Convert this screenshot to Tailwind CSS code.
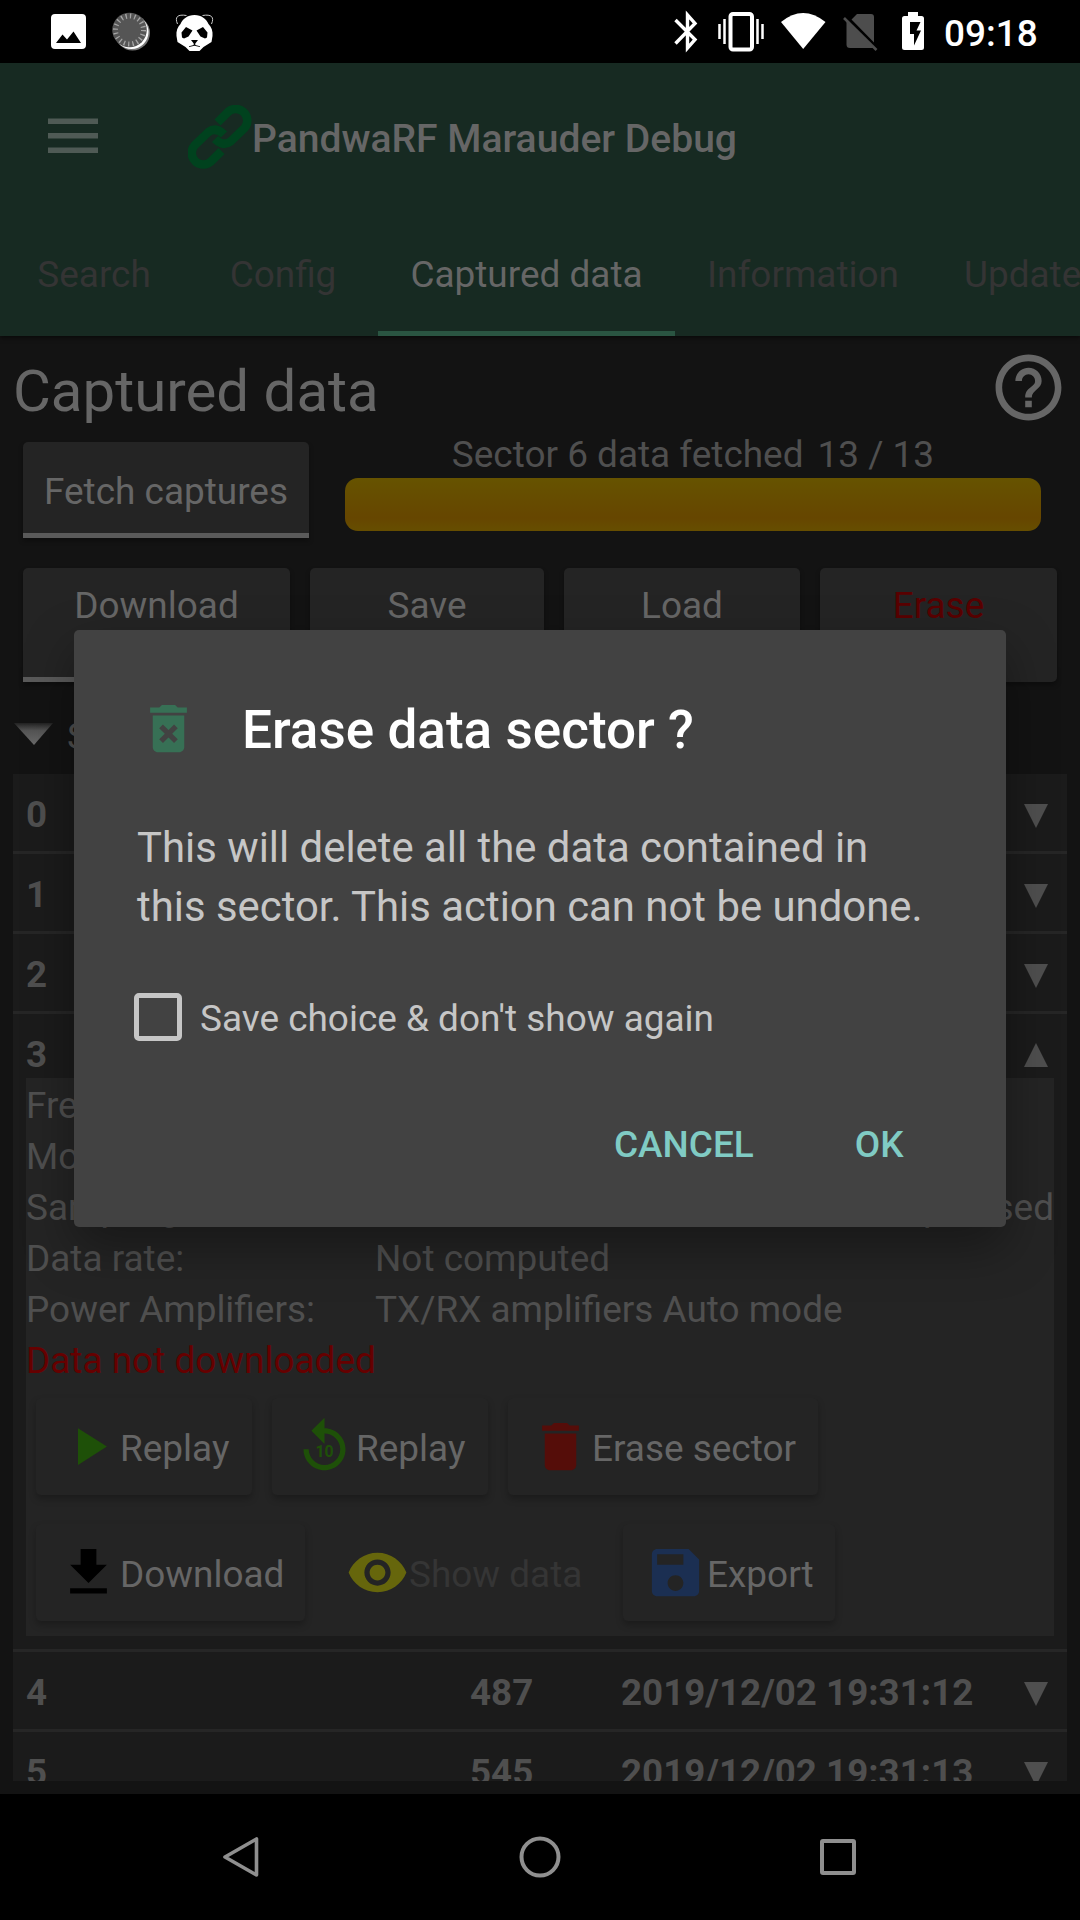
<!DOCTYPE html>
<html lang="en">
<head>
<meta charset="utf-8">
<title>PandwaRF Marauder Debug</title>
<script src="https://cdn.jsdelivr.net/npm/@tailwindcss/browser@4"></script>
</head>
<body class="bg-black">
<div class="relative flex h-[1920px] w-[1080px] flex-col overflow-hidden bg-[#131313] font-[Roboto,sans-serif] text-[36.95px] leading-[43px] text-[#4f4f4f]">

  <!-- Status bar -->
  <div class="flex h-[63px] shrink-0 items-center bg-black text-white">
    <svg class="h-[63px] w-[230px]" viewBox="0 0 230 63">
      <path fill="#fff" fill-rule="evenodd" d="M55 14h27a4 4 0 0 1 4 4v27a4 4 0 0 1-4 4H55a4 4 0 0 1-4-4V18a4 4 0 0 1 4-4zM56 43h25L73.500 31.500l-6.500 8-4.500-5z"/>
      <circle cx="132.500" cy="33" r="17.500" fill="#777"/>
      <circle cx="131.500" cy="32" r="17" fill="#fff"/>
      <circle cx="129.500" cy="30" r="17.300" fill="#555"/>
      <circle cx="129.500" cy="30" r="14" fill="none" stroke="#a5a5a5" stroke-width="5" stroke-dasharray="1.300 3.098"/>
      <path d="M177.500 24c-3-7 0-10 9-8.500M211.500 24c3-7 0-10-9-8.500" fill="none" stroke="#ccc" stroke-width="1"/>
      <path fill="#fff" d="M194.500 15c7 0 12 4 14 9 3 3 4.500 7 4 12l-1 6-8 5-4 4h-10l-4-4-8-5-1-6c-.5-5 1-9 4-12 2-5 7-9 14-9z"/>
      <path fill="#000" d="M186 27l6.500 3.500-4 6-4.500 2-2-1-.5-5zM203 27l-6.500 3.500 4 6 4.500 2 2-1 .5-5zM191 40h7l-2.700 3.500v1.500l4.700 1.300v.8l-5.500-1.300-5.500 1.300v-.8l4.700-1.300v-1.500z"/>
    </svg>
    <svg class="ml-[430px] h-[63px] w-[280px]" viewBox="660 0 280 63">
      <path d="M675.500 20l19.500 19.500-7.500 8.500V15l7.500 8.500-19.500 20" fill="none" stroke="#fff" stroke-width="3.400"/>
      <rect x="730.500" y="14" width="21.500" height="35.500" rx="2.500" fill="none" stroke="#fff" stroke-width="4"/>
      <path d="M719.500 24v15M724.500 19v25M757.500 19v25M762.500 24v15" stroke="#fff" stroke-width="2.500"/>
      <path fill="#fff" d="M781 22q22-18 44.500 0L803.200 49z"/>
      <path fill="#4d4d4d" d="M857 14h14q3 0 3 3v25.500L851.500 19.500zM846.500 21.500L874 48H850q-3.500 0-3.500-3.500z"/>
      <path d="M844 18l32.500 32" stroke="#4d4d4d" stroke-width="2.600"/>
      <path fill="#fff" fill-rule="evenodd" d="M908 12h10v4h3.500q2.500 0 2.500 2.500v29q0 2.500-2.500 2.500h-17q-2.500 0-2.500-2.500v-29q0-2.500 2.500-2.500h3.500zM910 22v12h4v11.500l7-15h-4.500l4-8.500z"/>
    </svg>
    <div class="ml-1 pt-[3px] font-medium">09:18</div>
  </div>

  <!-- App bar -->
  <div class="flex h-[273px] shrink-0 flex-col bg-[#172a22] shadow-[0_2px_4px_rgba(0,0,0,0.5)]">
    <div class="flex h-[147px] items-center">
      <svg class="ml-12 -mt-px h-[36px] w-[50px] text-[#4f5a55]" viewBox="0 0 50 36"><path fill="currentColor" d="M0 0.500h50v5.500H0zM0 15h50v5.500H0zM0 29.500h50V35H0z"/></svg>
      <svg class="ml-[90px] h-[64px] w-[64px]" viewBox="0 0 64 64" fill="none" stroke="#00421e" stroke-width="8.600">
        <path d="M29.500 17.500L39 8A11 11 0 0 1 56.500 23L42.500 36.500Q35 42 27 34"/>
        <path d="M33.500 46L24 55.500A11 11 0 0 1 6.500 40.500L20.500 27Q28 21.500 36 29.500"/>
      </svg>
      <div class="pt-[4px] text-[39.05px] leading-[46px] font-medium text-[#666]">PandwaRF Marauder Debug</div>
    </div>
    <div class="flex h-[126px] whitespace-nowrap text-[#343434]">
      <div class="flex w-[188px] shrink-0 justify-center pt-[43px]">Search</div>
      <div class="flex w-[190px] shrink-0 justify-center pt-[43px]">Config</div>
      <div class="flex w-[297px] shrink-0 justify-center border-b-[5px] border-[#2a5542] pt-[43px] text-[#666]">Captured data</div>
      <div class="flex w-[256px] shrink-0 justify-center pt-[43px]">Information</div>
      <div class="shrink-0 pt-[43px] pl-[33px]">Update</div>
    </div>
  </div>

  <!-- Page heading -->
  <div class="flex h-[106px] shrink-0 items-start justify-between pt-[12px] pr-[12px] pl-[13px]">
    <h1 class="pt-[9px] text-[58.2px] leading-[68px] text-[#666]">Captured data</h1>
    <svg class="h-[79px] w-[79px]" viewBox="0 0 24 24" fill="#666"><path d="M11 18h2v-2h-2v2zm1-16C6.480 2 2 6.480 2 12s4.480 10 10 10 10-4.480 10-10S17.520 2 12 2zm0 18c-4.410 0-8-3.590-8-8s3.590-8 8-8 8 3.590 8 8-3.590 8-8 8zm0-14c-2.210 0-4 1.790-4 4h2c0-1.100.9-2 2-2s2 .9 2 2c0 2-3 1.750-3 5h2c0-2.250 3-2.500 3-5 0-2.210-1.790-4-4-4z"/></svg>
  </div>

  <!-- Fetch + progress -->
  <div class="flex h-[96px] shrink-0 pl-[23px]">
    <div class="flex w-[286px] justify-center rounded-t-[5px] border-b-[5px] border-[#5a5a5a] bg-[#242424] pt-[28px] text-[#666] shadow-[0_3px_5px_rgba(0,0,0,0.3)]">Fetch captures</div>
    <div class="ml-9 w-[696px]">
      <div class="-mt-[9px] flex h-[45px] justify-center gap-[14px]"><span>Sector 6 data fetched</span><span>13 / 13</span></div>
      <div class="h-[53px] rounded-[13px] bg-[linear-gradient(#665300,#664600_75%,#664e00)]"></div>
    </div>
  </div>

  <!-- Actions -->
  <div class="mt-[30px] flex h-[114px] shrink-0 gap-5 pl-[23px] text-center text-[#666]">
    <div class="w-[267px] rounded-t-[5px] border-b-[5px] border-[#5a5a5a] bg-[#242424] pt-4 shadow-[0_3px_5px_rgba(0,0,0,0.3)]">Download</div>
    <div class="w-[234px] rounded-[5px] bg-[#242424] pt-4 shadow-[0_3px_5px_rgba(0,0,0,0.3)]">Save</div>
    <div class="w-[236px] rounded-[5px] bg-[#242424] pt-4 shadow-[0_3px_5px_rgba(0,0,0,0.3)]">Load</div>
    <div class="w-[237px] rounded-[5px] bg-[#242424] pt-4 text-[#590000] shadow-[0_3px_5px_rgba(0,0,0,0.3)]">Erase</div>
  </div>

  <!-- List header -->
  <div class="flex h-[92px] shrink-0 pt-[33px] pl-[12px]">
    <svg class="mt-[6px] h-[28px] w-[43px]" viewBox="0 0 43 28">
      <defs><linearGradient id="tri" x1="0" y1="0" x2="0" y2="1"><stop offset="0" stop-color="#222"/><stop offset=".35" stop-color="#555"/><stop offset="1" stop-color="#6a6a6a"/></linearGradient></defs>
      <path fill="url(#tri)" d="M2 2h39L22 24z"/>
    </svg>
    <span class="ml-3">Sector</span>
  </div>

  <!-- Sector list -->
  <div class="mx-[13px] h-[1007px] shrink-0 overflow-hidden bg-[#1b1b1b] text-[36.75px] font-bold">
    <div class="flex h-20 justify-between border-b-[3px] border-[#262626] pt-[19px] pr-[19px] pl-[13px]"><span>0</span><svg class="mt-[11px] h-6 w-6" viewBox="0 0 24 24" fill="#4f4f4f"><path d="M0 0h24L12 24z"/></svg></div>
    <div class="flex h-20 justify-between border-b-[3px] border-[#262626] pt-[19px] pr-[19px] pl-[13px]"><span>1</span><svg class="mt-[11px] h-6 w-6" viewBox="0 0 24 24" fill="#4f4f4f"><path d="M0 0h24L12 24z"/></svg></div>
    <div class="flex h-20 justify-between border-b-[3px] border-[#262626] pt-[19px] pr-[19px] pl-[13px]"><span>2</span><svg class="mt-[11px] h-6 w-6" viewBox="0 0 24 24" fill="#4f4f4f"><path d="M0 0h24L12 24z"/></svg></div>
    <div class="h-[638px] border-b-[3px] border-[#262626]">
      <div class="flex h-16 justify-between pt-[19px] pr-[19px] pl-[13px]"><span>3</span><svg class="mt-[10px] h-6 w-6" viewBox="0 0 24 24" fill="#4f4f4f"><path d="M0 24h24L12 0z"/></svg></div>
      <div class="mx-[13px] h-[558px] bg-[#242424] pt-[2px] text-[36.95px] font-normal">
        <div class="grid grid-cols-[349px_679px] leading-[51px] whitespace-nowrap">
          <span>Frequency:</span><span>433.920 MHz</span>
          <span>Modulation:</span><span>ASK/OOK</span>
          <span>Sampling rate:</span><span class="text-right">Not compressed</span>
          <span>Data rate:</span><span>Not computed</span>
          <span>Power Amplifiers:</span><span>TX/RX amplifiers Auto mode</span>
          <span class="text-[#660000]">Data not downloaded</span>
        </div>
        <div class="mt-[12px] ml-[10px] flex h-[97px] gap-5 text-[#666]">
          <div class="flex w-[216px] items-center rounded-[5px] bg-[#242424] pl-[21px] shadow-[0_4px_7px_rgba(0,0,0,0.25)]">
            <svg class="h-[63px] w-[63px]" viewBox="0 0 24 24" fill="#1e5008"><path d="M8 5v14l11-7z"/></svg><span class="pt-1">Replay</span>
          </div>
          <div class="flex w-[216px] items-center rounded-[5px] bg-[#242424] pl-[21px] shadow-[0_4px_7px_rgba(0,0,0,0.25)]">
            <svg class="h-[63px] w-[63px]" viewBox="0 0 24 24" fill="#1e5008"><path d="M12 5V1L7 6l5 5V7c3.300 0 6 2.700 6 6s-2.700 6-6 6-6-2.700-6-6H4c0 4.400 3.600 8 8 8s8-3.600 8-8-3.600-8-8-8z"/><text x="12" y="16" text-anchor="middle" font-size="6" font-weight="700">10</text></svg><span class="pt-1">Replay</span>
          </div>
          <div class="flex w-[310px] items-center rounded-[5px] bg-[#242424] pl-[21px] shadow-[0_4px_7px_rgba(0,0,0,0.25)]">
            <svg class="h-[63px] w-[63px]" viewBox="0 0 24 24" fill="#550d09"><path d="M6 19c0 1.100.9 2 2 2h8c1.100 0 2-.9 2-2V7H6v12zM19 4h-3.500l-1-1h-5l-1 1H5v2h14V4z"/></svg><span class="pt-1">Erase sector</span>
          </div>
        </div>
        <div class="mt-[29px] ml-[10px] flex h-[97px] text-[#666]">
          <div class="flex w-[269px] items-center rounded-[5px] bg-[#242424] pl-[21px] shadow-[0_4px_7px_rgba(0,0,0,0.25)]">
            <svg class="h-[63px] w-[63px]" viewBox="0 0 24 24" fill="#000"><path d="M19 9h-4V3H9v6H5l7 7 7-7zM5 18v2h14v-2H5z"/></svg><span class="pt-1">Download</span>
          </div>
          <div class="flex w-[318px] items-center pl-[41px] text-[#353535]">
            <svg class="h-[63px] w-[63px]" viewBox="0 0 24 24" fill="#66660c"><path d="M12 4.500C7 4.500 2.730 7.610 1 12c1.730 4.390 6 7.500 11 7.500s9.270-3.110 11-7.500c-1.730-4.390-6-7.500-11-7.500zM12 17c-2.760 0-5-2.240-5-5s2.240-5 5-5 5 2.240 5 5-2.240 5-5 5zm0-8c-1.660 0-3 1.340-3 3s1.340 3 3 3 3-1.340 3-3-1.340-3-3-3z"/></svg><span class="pt-1">Show data</span>
          </div>
          <div class="flex w-[212px] items-center rounded-[5px] bg-[#242424] pl-[21px] shadow-[0_4px_7px_rgba(0,0,0,0.25)]">
            <svg class="h-[63px] w-[63px]" viewBox="0 0 24 24" fill="#1b2f52"><path d="M17 3H5c-1.110 0-2 .9-2 2v14c0 1.100.89 2 2 2h14c1.100 0 2-.9 2-2V7l-4-4zm-5 16c-1.660 0-3-1.340-3-3s1.340-3 3-3 3 1.340 3 3-1.340 3-3 3zm3-10H5V5h10v4z"/></svg><span class="pt-1">Export</span>
          </div>
        </div>
      </div>
    </div>
    <div class="flex h-20 border-b-[3px] border-[#262626] pt-[19px] pl-[13px]"><span class="w-[444px]">4</span><span class="w-[151px]">487</span><span class="w-[390px]">2019/12/02 19:31:12</span><svg class="mt-[11px] ml-[13px] h-6 w-6" viewBox="0 0 24 24" fill="#4f4f4f"><path d="M0 0h24L12 24z"/></svg></div>
    <div class="flex h-20 pt-[19px] pl-[13px]"><span class="w-[444px]">5</span><span class="w-[151px]">545</span><span class="w-[390px]">2019/12/02 19:31:13</span><svg class="mt-[11px] ml-[13px] h-6 w-6" viewBox="0 0 24 24" fill="#4f4f4f"><path d="M0 0h24L12 24z"/></svg></div>
  </div>

  <!-- Navigation bar -->
  <div class="mt-[13px] flex h-[126px] shrink-0 items-center justify-between bg-black pr-[223px] pl-[222px]">
    <svg class="h-[42px] w-[38px]" viewBox="0 0 38 42" fill="none" stroke="#8f8f8f" stroke-width="3.600" stroke-linejoin="round"><path d="M34.500 3v36L3 21z"/></svg>
    <svg class="h-[42px] w-[42px]" viewBox="0 0 42 42" fill="none" stroke="#8f8f8f" stroke-width="4"><circle cx="21" cy="21" r="18.500"/></svg>
    <svg class="h-[38px] w-[38px]" viewBox="0 0 38 38" fill="none" stroke="#8f8f8f" stroke-width="4"><rect x="3" y="3" width="32" height="32" rx="1"/></svg>
  </div>

  <!-- Confirmation dialog -->
  <div class="absolute top-[630px] left-[74px] flex h-[597px] w-[932px] flex-col rounded-[5px] bg-[#424242] px-[63px] text-[#c6c6c6] shadow-[0_20px_50px_rgba(0,0,0,0.35)]">
    <div class="mt-[67px] flex h-[63px] items-center">
      <svg class="h-[63px] w-[63px]" viewBox="0 0 24 24" fill="#377055"><path fill-rule="evenodd" d="M6 19c0 1.100.9 2 2 2h8c1.100 0 2-.9 2-2V7H6v12zm2.460-7.120l1.410-1.410L12 12.590l2.120-2.120 1.410 1.410L13.410 14l2.120 2.120-1.410 1.410L12 15.410l-2.120 2.120-1.410-1.410L10.590 14zM15.500 4l-1-1h-5l-1 1H5v2h14V4z"/></svg>
      <h2 class="ml-[42px] pt-[2px] text-[53.1px] leading-[62px] font-medium text-white">Erase data sector ?</h2>
    </div>
    <p class="mt-[58px] text-[41.87px] leading-[59px] whitespace-nowrap">This will delete all the data contained in<br>this sector. This action can not be undone.</p>
    <div class="mt-[55px] -ml-[3px] flex h-12 items-start">
      <div class="mt-[2px] h-12 w-12 rounded-[5px] border-5 border-[#c6c6c6]"></div>
      <span class="ml-[18px] pt-[6px]">Save choice &amp; don't show again</span>
    </div>
    <div class="mt-[84px] flex font-medium text-[#80cbc4]">
      <span class="ml-[477px]">CANCEL</span><span class="ml-[101px]">OK</span>
    </div>
  </div>
</div>
</body>
</html>
